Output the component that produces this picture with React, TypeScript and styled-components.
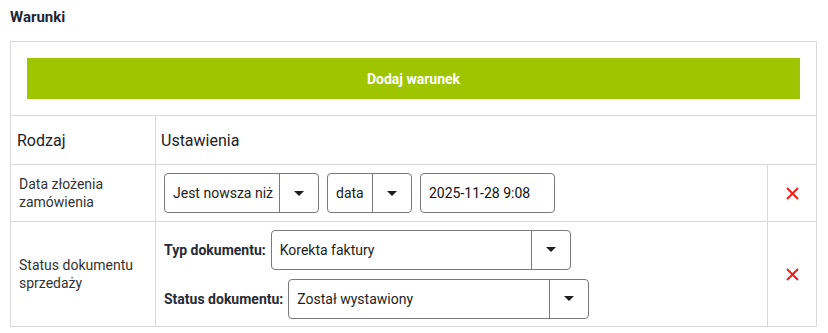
import React from 'react';
import styled, { createGlobalStyle } from 'styled-components';

const GlobalStyle = createGlobalStyle`
  body {
    margin: 0;
    background: #fff;
    font-family: Roboto, 'Liberation Sans', sans-serif;
    color: #222;
  }
`;

const Page = styled.div({
  padding: '7px 11px 0 10px',
});

const Title = styled.h3({
  margin: 0,
  fontSize: '15px',
  fontWeight: 700,
  lineHeight: '20px',
  color: '#1f2634',
  height: '34px',
});

const Box = styled.div({
  width: '807px',
  boxSizing: 'border-box',
  border: '1px solid #d9d9d9',
});

const ButtonArea = styled.div({
  padding: '16px',
});

const AddButton = styled.button({
  display: 'block',
  width: '100%',
  height: '41px',
  border: 'none',
  background: '#9ec500',
  color: '#fff',
  fontFamily: 'Roboto, sans-serif',
  fontWeight: 700,
  fontSize: '14px',
  cursor: 'pointer',
});

const Row = styled.div<{ $height: number }>(({ $height }) => ({
  display: 'grid',
  gridTemplateColumns: '144px 1fr 49px',
  boxSizing: 'border-box',
  borderTop: '1px solid #d9d9d9',
  height: `${$height}px`,
}));

const Cell = styled.div<{ $divider?: boolean; $pad?: string; $span?: number }>(
  ({ $divider, $pad, $span }) => ({
    display: 'flex',
    alignItems: 'center',
    borderLeft: $divider ? '1px solid #d9d9d9' : 'none',
    padding: $pad ?? '0 8px',
    minWidth: 0,
    gridColumn: $span ? `span ${$span}` : 'auto',
  })
);

const HeadText = styled.span({
  fontSize: '16px',
  color: '#222',
});

const KindText = styled.span({
  fontSize: '14px',
  lineHeight: '18px',
  color: '#333',
});

const Controls = styled.div({
  display: 'flex',
  alignItems: 'center',
  gap: '8px',
});

const Stack = styled.div({
  display: 'flex',
  flexDirection: 'column',
  gap: '9px',
});

const Field = styled.label({
  display: 'flex',
  alignItems: 'center',
  gap: '5px',
});

const FieldLabel = styled.span({
  fontSize: '14px',
  fontWeight: 700,
  color: '#262b36',
});

const SelectBox = styled.div<{ $width: number }>(({ $width }) => ({
  display: 'flex',
  width: `${$width}px`,
  height: '40px',
  boxSizing: 'border-box',
  border: '1px solid #7a7a7a',
  borderRadius: '4px',
  background: '#fff',
}));

const SelectValue = styled.span({
  flex: 1,
  display: 'flex',
  alignItems: 'center',
  padding: '0 8px',
  fontSize: '14px',
  color: '#222',
  whiteSpace: 'nowrap',
  overflow: 'hidden',
});

const ArrowPart = styled.span({
  width: '38px',
  display: 'flex',
  alignItems: 'center',
  justifyContent: 'center',
  borderLeft: '1px solid #7a7a7a',
});

const DateInput = styled.div({
  width: '135px',
  height: '40px',
  boxSizing: 'border-box',
  border: '1px solid #7a7a7a',
  borderRadius: '4px',
  display: 'flex',
  alignItems: 'center',
  padding: '0 8px',
  fontSize: '14px',
  color: '#111',
});

const DeleteCell = styled(Cell)({
  justifyContent: 'center',
});

const DeleteButton = styled.button({
  border: 'none',
  background: 'none',
  padding: 0,
  display: 'flex',
  cursor: 'pointer',
});

function Caret() {
  return (
    <svg width="10" height="5" viewBox="0 0 10 5">
      <path d="M0 0h10L5 5z" fill="#1e1e1e" />
    </svg>
  );
}

function Select({ value, width }: { value: string; width: number }) {
  return (
    <SelectBox $width={width}>
      <SelectValue>{value}</SelectValue>
      <ArrowPart>
        <Caret />
      </ArrowPart>
    </SelectBox>
  );
}

function Remove() {
  return (
    <DeleteButton aria-label="Usuń">
      <svg width="13" height="13" viewBox="0 0 13 13">
        <path d="M1 1l11 11M12 1L1 12" stroke="#f01c1c" strokeWidth="2" />
      </svg>
    </DeleteButton>
  );
}

export default function App(): React.ReactElement {
  return (
    <Page>
      <GlobalStyle />
      <Title>Warunki</Title>
      <Box>
        <ButtonArea>
          <AddButton>Dodaj warunek</AddButton>
        </ButtonArea>
        <Row $height={49}>
          <Cell $pad="0 6px">
            <HeadText>Rodzaj</HeadText>
          </Cell>
          <Cell $divider $pad="0 5px" $span={2}>
            <HeadText>Ustawienia</HeadText>
          </Cell>
        </Row>
        <Row $height={57}>
          <Cell>
            <KindText>Data złożenia zamówienia</KindText>
          </Cell>
          <Cell $divider>
            <Controls>
              <Select value="Jest nowsza niż" width={155} />
              <Select value="data" width={85} />
              <DateInput>2025-11-28 9:08</DateInput>
            </Controls>
          </Cell>
          <DeleteCell $divider>
            <Remove />
          </DeleteCell>
        </Row>
        <Row $height={105}>
          <Cell>
            <KindText>Status dokumentu sprzedaży</KindText>
          </Cell>
          <Cell $divider>
            <Stack>
              <Field>
                <FieldLabel>Typ dokumentu:</FieldLabel>
                <Select value="Korekta faktury" width={300} />
              </Field>
              <Field>
                <FieldLabel>Status dokumentu:</FieldLabel>
                <Select value="Został wystawiony" width={301} />
              </Field>
            </Stack>
          </Cell>
          <DeleteCell $divider>
            <Remove />
          </DeleteCell>
        </Row>
      </Box>
    </Page>
  );
}
